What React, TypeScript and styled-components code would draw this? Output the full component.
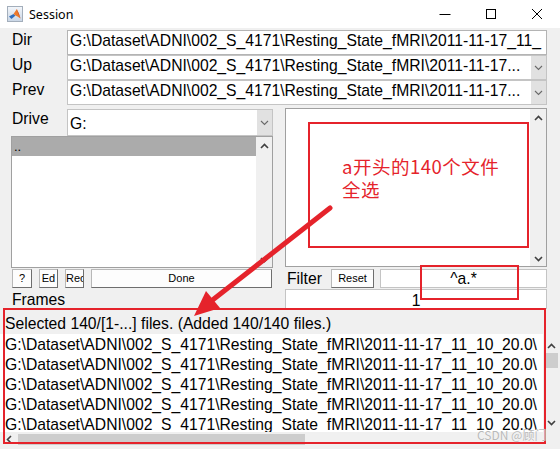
import React from 'react';
import styled, { createGlobalStyle } from 'styled-components';

const RED = '#e5232b';
const UI_FONT = '"Liberation Sans", Arial, sans-serif';

const dirPath = 'G:\\Dataset\\ADNI\\002_S_4171\\Resting_State_fMRI\\2011-11-17_11_';
const shortPath = 'G:\\Dataset\\ADNI\\002_S_4171\\Resting_State_fMRI\\2011-11-17...';
const filePath = 'G:\\Dataset\\ADNI\\002_S_4171\\Resting_State_fMRI\\2011-11-17_11_10_20.0\\';

type ChevronProps = { dir: 'up' | 'down' | 'left'; color?: string; bold?: boolean };

const Chevron = ({ dir, color = '#6a6a6a', bold }: ChevronProps) => {
  const pts = dir === 'up' ? '1,5 4.5,1.5 8,5' : dir === 'down' ? '1,1 4.5,4.5 8,1' : '5,1 1.5,4.5 5,8';
  const w = dir === 'left' ? 6 : 9;
  const h = dir === 'left' ? 9 : 6;
  return (
    <svg width={w} height={h} viewBox={`0 0 ${w} ${h}`}>
      <polyline points={pts} fill="none" stroke={color} strokeWidth={bold ? 1.6 : 1.1} />
    </svg>
  );
};

const MatlabIcon = () => (
  <svg width="16" height="16" viewBox="0 0 16 16">
    <defs>
      <linearGradient id="mlbg" x1="0" y1="0" x2="0" y2="1">
        <stop offset="0" stopColor="#f4f7fb" />
        <stop offset="1" stopColor="#c9d6e6" />
      </linearGradient>
    </defs>
    <rect x="0.5" y="0.5" width="15" height="15" fill="url(#mlbg)" stroke="#a3aebb" />
    <polygon points="2,10.5 6.5,8 8.5,9.5 4.5,13" fill="#2f6fbf" />
    <polygon points="6.5,8 9.8,3 12.2,8.5 13.5,12.5 10.5,10.5 8.5,9.5" fill="#ec7a2c" />
    <polygon points="9.8,3 12.2,8.5 13.5,12.5 11.2,7.2" fill="#b73419" />
  </svg>
);

const App = () => {
  const rows = [1, 2, 3, 4, 5];
  return (
    <>
      <GlobalStyle />
      <Window>
        <TitleBar>
          <MatlabIcon />
          <Title>Session</Title>
          <WinControls>
            <WinButton>
              <svg width="12" height="12"><line x1="0.5" y1="6.5" x2="11.5" y2="6.5" stroke="#000" /></svg>
            </WinButton>
            <WinButton>
              <svg width="12" height="12"><rect x="1.5" y="1.5" width="9" height="9" fill="none" stroke="#000" /></svg>
            </WinButton>
            <WinButton>
              <svg width="12" height="12">
                <line x1="1" y1="1" x2="11" y2="11" stroke="#000" />
                <line x1="11" y1="1" x2="1" y2="11" stroke="#000" />
              </svg>
            </WinButton>
          </WinControls>
        </TitleBar>

        <PathRows>
          <PathRow>
            <RowLabel>Dir</RowLabel>
            <TextField>{dirPath}</TextField>
          </PathRow>
          <PathRow>
            <RowLabel>Up</RowLabel>
            <ComboField>
              <ComboText>{shortPath}</ComboText>
              <DropArrow><Chevron dir="down" /></DropArrow>
            </ComboField>
          </PathRow>
          <PathRow>
            <RowLabel>Prev</RowLabel>
            <ComboField>
              <ComboText>{shortPath}</ComboText>
              <DropArrow><Chevron dir="down" /></DropArrow>
            </ComboField>
          </PathRow>
        </PathRows>

        <Middle>
          <Column>
            <DriveRow>
              <DriveLabel>Drive</DriveLabel>
              <ComboField $tall>
                <ComboText $tall>G:</ComboText>
                <DropArrow><Chevron dir="down" /></DropArrow>
              </ComboField>
            </DriveRow>
            <ListBox>
              <ListItems>
                <SelectedItem>..</SelectedItem>
              </ListItems>
              <ScrollTrack>
                <Chevron dir="up" color="#404040" bold />
                <Chevron dir="down" color="#404040" bold />
              </ScrollTrack>
            </ListBox>
            <ButtonRow>
              <SmallButton $width={20}>?</SmallButton>
              <SmallButton $width={19}>Ed</SmallButton>
              <SmallButton $width={19}>Rec</SmallButton>
              <SmallButton $width={181}>Done</SmallButton>
            </ButtonRow>
            <FramesLabel>Frames</FramesLabel>
          </Column>

          <Column>
            <FilesPanel>
              <ListItems />
              <ScrollTrack>
                <Chevron dir="up" color="#404040" bold />
                <Chevron dir="down" color="#404040" bold />
              </ScrollTrack>
            </FilesPanel>
            <FilterRow>
              <FilterLabel>Filter</FilterLabel>
              <SmallButton $width={43}>Reset</SmallButton>
              <CenterField>^a.*</CenterField>
            </FilterRow>
            <FramesField>1</FramesField>
          </Column>
        </Middle>

        <StatusBar>Selected 140/[1-...] files. (Added 140/140 files.)</StatusBar>

        <FileList>
          <FileLines>
            {rows.map((r) => (
              <FileLine key={r}>{filePath}</FileLine>
            ))}
          </FileLines>
          <VScroll>
            <Chevron dir="up" color="#404040" bold />
            <VThumb />
            <Chevron dir="down" color="#404040" bold />
          </VScroll>
          <HScroll>
            <HArrow><Chevron dir="left" color="#404040" bold /></HArrow>
            <HThumb />
          </HScroll>
          <Corner />
        </FileList>

        <Overlay width="560" height="449" viewBox="0 0 560 449">
          <line x1="330" y1="208" x2="210" y2="302" stroke={RED} strokeWidth="5" strokeLinecap="round" />
          <polygon points="194,316 206,291 220,308" fill={RED} />
        </Overlay>
        <NoteBox $left={308} $top={122} $width={221} $height={126}>
          a开头的140个文件
          <br />
          全选
        </NoteBox>
        <NoteBox $left={420} $top={265} $width={99} $height={31} />
        <NoteBox $left={3} $top={308} $width={543} $height={136} />
        <Watermark>CSDN @顾门</Watermark>
      </Window>
    </>
  );
};

const GlobalStyle = createGlobalStyle`
  html, body {
    margin: 0;
    padding: 0;
    background: #f0f0f0;
  }
  body {
    font-family: ${UI_FONT};
    color: #000;
  }
`;

const Window = styled.div`
  position: relative;
  width: 560px;
  height: 449px;
  overflow: hidden;
  background: #f0f0f0;
  display: flex;
  flex-direction: column;
  font-size: 15.7px;
`;

const TitleBar = styled.div`
  height: 28px;
  flex: none;
  background: #fff;
  display: flex;
  align-items: center;
  padding-left: 7px;
`;

const Title = styled.span`
  margin-left: 6px;
  font-family: "Noto Sans", sans-serif;
  font-size: 12.5px;
  color: #000;
`;

const WinControls = styled.div`
  margin-left: auto;
  display: flex;
  height: 100%;
`;

const WinButton = styled.div`
  width: 46px;
  height: 100%;
  display: flex;
  align-items: center;
  justify-content: center;
`;

const PathRows = styled.div`
  margin-top: 2px;
  display: flex;
  flex-direction: column;
`;

const PathRow = styled.div`
  display: grid;
  grid-template-columns: 55px 480px;
  padding-left: 12px;
  height: 25px;
`;

const RowLabel = styled.div`
  line-height: 20px;
`;

const TextField = styled.div`
  background: #fff;
  border: 1px solid #b4b4b4;
  padding-left: 2px;
  line-height: 19px;
  white-space: nowrap;
  overflow: hidden;
`;

const ComboField = styled.div<{ $tall?: boolean }>`
  display: flex;
  background: #fff;
  border: 1px solid #c4c4c4;
  height: ${(p) => (p.$tall ? '27px' : '25px')};
  margin-top: ${(p) => (p.$tall ? '1px' : '0')};
  box-sizing: border-box;
  flex: 1;
  min-width: 0;
`;

const ComboText = styled.div<{ $tall?: boolean }>`
  flex: 1;
  padding-left: 2px;
  line-height: ${(p) => (p.$tall ? '27px' : '19px')};
  white-space: nowrap;
  overflow: hidden;
`;

const DropArrow = styled.div`
  width: 15px;
  flex: none;
  background: #e1e1e1;
  display: flex;
  align-items: center;
  justify-content: center;
`;

const Middle = styled.div`
  margin-top: 3px;
  height: 201px;
  flex: none;
  overflow: hidden;
  display: flex;
  gap: 12px;
  padding-left: 11px;
`;

const Column = styled.div`
  width: 262px;
  display: flex;
  flex-direction: column;
`;

const DriveRow = styled.div`
  height: 28px;
  display: flex;
`;

const DriveLabel = styled.div`
  width: 55px;
  padding-left: 1px;
  padding-top: 1px;
  line-height: 20px;
`;

const ListBox = styled.div`
  height: 136px;
  box-sizing: border-box;
  background: #fff;
  border: 1px solid #a0a0a0;
  display: flex;
`;

const FilesPanel = styled(ListBox)`
  height: 163px;
`;

const ListItems = styled.div`
  flex: 1;
`;

const SelectedItem = styled.div`
  height: 19px;
  background: #ababab;
  padding-left: 2px;
  font-size: 13px;
  line-height: 19px;
`;

const ScrollTrack = styled.div`
  width: 16px;
  flex: none;
  background: #f0f0f0;
  display: flex;
  flex-direction: column;
  align-items: center;
  justify-content: space-between;
  padding: 6px 0 4px;
`;

const ButtonRow = styled.div`
  margin-top: 1px;
  height: 19px;
  display: flex;
  gap: 7px;
  padding-left: 1px;
`;

const SmallButton = styled.div<{ $width: number }>`
  width: ${(p) => p.$width}px;
  flex: none;
  box-sizing: border-box;
  height: 19px;
  background: #fdfdfd;
  border: 1px solid #b8b8b8;
  border-right-color: #6e6e6e;
  border-bottom-color: #6e6e6e;
  font-size: 11px;
  line-height: 17px;
  text-align: center;
  white-space: nowrap;
  overflow: hidden;
`;

const FramesLabel = styled.div`
  margin-top: 3px;
  padding-left: 1px;
  line-height: 18px;
`;

const FilterRow = styled.div`
  margin-top: 2px;
  height: 19px;
  display: flex;
  align-items: stretch;
`;

const FilterLabel = styled.div`
  width: 44px;
  padding-left: 2px;
  line-height: 19px;
  flex: none;
`;

const CenterField = styled.div`
  margin-left: 6px;
  flex: 1;
  box-sizing: border-box;
  background: #fff;
  border: 1px solid #c4c4c4;
  text-align: center;
  line-height: 18px;
`;

const FramesField = styled(CenterField)`
  margin: 1px 0 0;
  flex: none;
  height: 20px;
  line-height: 21px;
`;

const StatusBar = styled.div`
  height: 25px;
  flex: none;
  box-sizing: border-box;
  padding: 4px 0 0 5px;
  line-height: 21px;
  white-space: nowrap;
`;

const FileList = styled.div`
  height: 113px;
  flex: none;
  display: grid;
  grid-template-columns: 543px 17px;
  grid-template-rows: 98px 15px;
  background: #fff;
`;

const FileLines = styled.div`
  padding: 1px 0 0 5px;
  overflow: hidden;
`;

const FileLine = styled.div`
  line-height: 20px;
  white-space: nowrap;
`;

const VScroll = styled.div`
  background: #f0f0f0;
  display: flex;
  flex-direction: column;
  align-items: center;
  padding: 9px 0 6px;
`;

const VThumb = styled.div`
  width: 13px;
  height: 15px;
  margin: 4px 0 auto;
  background: #cdcdcd;
`;

const HScroll = styled.div`
  background: #f0f0f0;
  display: flex;
  align-items: stretch;
`;

const HArrow = styled.div`
  width: 18px;
  display: flex;
  align-items: center;
  justify-content: center;
`;

const HThumb = styled.div`
  width: 287px;
  margin: 2px 0;
  background: #cdcdcd;
`;

const Corner = styled.div`
  background: #f0f0f0;
`;

const Overlay = styled.svg`
  position: absolute;
  left: 0;
  top: 0;
  pointer-events: none;
`;

const NoteBox = styled.div<{ $left: number; $top: number; $width: number; $height: number }>`
  position: absolute;
  left: ${(p) => p.$left}px;
  top: ${(p) => p.$top}px;
  width: ${(p) => p.$width}px;
  height: ${(p) => p.$height}px;
  box-sizing: border-box;
  border: 2px solid ${RED};
  padding: 31px 0 0 32px;
  color: ${RED};
  font-family: "Noto Sans CJK SC", "Noto Sans", sans-serif;
  font-size: 18.5px;
  letter-spacing: 0.5px;
  line-height: 23px;
`;

const Watermark = styled.div`
  position: absolute;
  left: 477px;
  top: 426px;
  font-family: "Noto Sans CJK SC", "Noto Sans", sans-serif;
  font-size: 12px;
  color: #b9b9b9;
  text-shadow: 0 0 1px #fff;
`;

export default App;
